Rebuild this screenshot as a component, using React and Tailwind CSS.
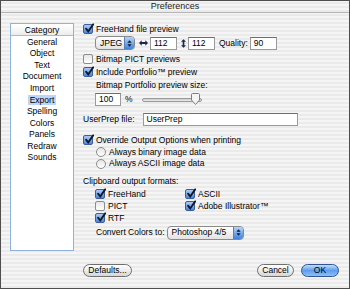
import React from 'react';

const stripes =
  'bg-[repeating-linear-gradient(0deg,#eaeaea_0px,#eaeaea_2px,#f5f5f5_2px,#f5f5f5_4px)]';

function Check({ on }) {
  if (!on) {
    return (
      <span className="w-[10px] h-[10px] rounded-[2px] border border-[#8c8c8c] bg-linear-to-b from-[#e6e6e6] to-white shrink-0" />
    );
  }
  return (
    <span className="relative w-[10px] h-[10px] rounded-[2px] border border-[#3b5f9c] bg-linear-to-b from-[#a9cbf5] to-[#4a86dc] shrink-0">
      <svg viewBox="0 0 12 12" className="absolute -top-[2px] left-0 w-[11px] h-[11px]">
        <path d="M2.2 6.2 L4.6 9.2 L10 1.5" stroke="#101828" strokeWidth="2" fill="none" strokeLinecap="round" />
      </svg>
    </span>
  );
}

function Radio() {
  return (
    <span className="w-[10px] h-[10px] rounded-full border border-[#8c8c8c] bg-linear-to-b from-[#e4e4e4] to-white shrink-0" />
  );
}

function CheckRow({ on, label, className = '' }) {
  return (
    <div className={`flex items-center gap-[3px] h-[12px] ${className}`}>
      <Check on={on} />
      <span>{label}</span>
    </div>
  );
}

function Field({ value, className = '' }) {
  return (
    <div className={`h-[13px] bg-white border border-[#9a9a9a] border-t-[#6e6e6e] flex items-center pl-[3px] ${className}`}>
      {value}
    </div>
  );
}

function Popup({ label, className = '' }) {
  return (
    <div className={`h-[14px] rounded-[4px] border border-[#8a8a8a] bg-linear-to-b from-white to-[#e2e2e2] flex items-center overflow-hidden ${className}`}>
      <span className="flex-1 pl-[4px]">{label}</span>
      <span className="w-[10px] h-full bg-linear-to-b from-[#b4d3f7] to-[#3f80da] border-l border-[#5a7fb5] flex items-center justify-center">
        <svg viewBox="0 0 6 10" className="w-[5px] h-[9px]">
          <path d="M0.5 4 L3 1 L5.5 4 Z M0.5 6 L3 9 L5.5 6 Z" fill="#0d1a33" />
        </svg>
      </span>
    </div>
  );
}

function Pill({ children, blue, className = '' }) {
  return (
    <div
      className={`h-[13px] rounded-full border flex items-center justify-center ${
        blue
          ? 'border-[#2f5594] bg-linear-to-b from-[#c2dcfa] via-[#5f9ded] to-[#8cc0f5]'
          : 'border-[#6f6f6f] bg-linear-to-b from-white via-[#ececec] to-[#d6d6d6]'
      } ${className}`}
    >
      {children}
    </div>
  );
}

const categories = ['General', 'Object', 'Text', 'Document', 'Import', 'Export', 'Spelling', 'Colors', 'Panels', 'Redraw', 'Sounds'];

export default function App() {
  return (
    <div
      className={`w-[350px] h-[289px] border border-[#4e4e4e] ${stripes} flex flex-col text-[8.5px] leading-none text-black overflow-hidden`}
      style={{ fontFamily: '"Liberation Sans", Arial, sans-serif' }}
    >
      {/* Title bar */}
      <div className="h-[12px] shrink-0 flex items-center justify-center border-b border-[#b4b4b4] text-[9px] text-[#222]">
        Preferences
      </div>

      <div className="flex pt-[10px]">
        {/* Category list */}
        <div className="ml-[9px] w-[64px] h-[228px] bg-white border border-[#8fb2de] flex flex-col items-center">
          <div className="w-[62px] h-[11px] mt-[1px] flex items-center justify-center border-b border-[#b8b8b8] bg-linear-to-b from-white to-[#ececec]">
            Category
          </div>
          {categories.map((c) => (
            <div key={c} className="h-[11.6px] flex items-center">
              <span className={c === 'Export' ? 'bg-[#bcd6fb] px-[2px] py-[1px]' : 'px-[2px]'}>{c}</span>
            </div>
          ))}
        </div>

        {/* Options panel */}
        <div className="ml-[9px] flex flex-col">
          <CheckRow on label="FreeHand file preview" />

          <div className="flex items-center h-[14px] mt-[1px] ml-[12px]">
            <Popup label="JPEG" className="w-[40px]" />
            <svg viewBox="0 0 10 6" className="w-[9px] h-[6px] ml-[4px]">
              <path d="M0 3 L3 0 L3 2 L7 2 L7 0 L10 3 L7 6 L7 4 L3 4 L3 6 Z" fill="#1b2a4a" />
            </svg>
            <Field value="112" className="w-[27px] ml-[2px]" />
            <svg viewBox="0 0 6 10" className="w-[5px] h-[9px] ml-[4px]">
              <path d="M3 0 L6 3 L4 3 L4 7 L6 7 L3 10 L0 7 L2 7 L2 3 L0 3 Z" fill="#1b2a4a" />
            </svg>
            <Field value="112" className="w-[27px] ml-[2px]" />
            <span className="ml-[4px]">Quality:</span>
            <Field value="90" className="w-[27px] ml-[2px]" />
          </div>

          <CheckRow label="Bitmap PICT previews" className="mt-[3px]" />
          <CheckRow on label="Include Portfolio™ preview" className="mt-[1px]" />
          <div className="h-[12px] flex items-center ml-[13px] mt-[1px]">Bitmap Portfolio preview size:</div>

          <div className="flex items-center h-[13px] mt-[2px] ml-[12px]">
            <Field value="100" className="w-[26px]" />
            <span className="ml-[4px]">%</span>
            <div className="relative ml-[9px] w-[60px] h-[13px] flex items-center">
              <div className="w-full h-[4px] rounded-full border border-[#9a9a9a] bg-linear-to-b from-[#c8c8c8] to-[#f0f0f0]" />
              <svg viewBox="0 0 9 12" className="absolute left-[49px] top-0 w-[9px] h-[12px]">
                <path d="M0.5 1.5 Q0.5 0.5 1.5 0.5 L7.5 0.5 Q8.5 0.5 8.5 1.5 L8.5 7 L4.5 11.5 L0.5 7 Z" fill="#f4f4f4" stroke="#7d7d7d" />
              </svg>
            </div>
          </div>

          <div className="flex items-center h-[13px] mt-[7px]">
            <span>UserPrep file:</span>
            <Field value="UserPrep" className="w-[155px] ml-[8px]" />
          </div>

          <CheckRow on label="Override Output Options when printing" className="mt-[8px]" />
          <div className="flex items-center gap-[3px] h-[12px] ml-[13px]">
            <Radio />
            <span>Always binary image data</span>
          </div>
          <div className="flex items-center gap-[3px] h-[11px] ml-[13px]">
            <Radio />
            <span>Always ASCII image data</span>
          </div>

          <div className="h-[12px] flex items-center mt-[6px]">Clipboard output formats:</div>
          <div className="grid grid-cols-[90px_auto] ml-[12px] mt-[1px]">
            <CheckRow on label="FreeHand" />
            <CheckRow on label="ASCII" />
            <CheckRow label="PICT" />
            <CheckRow on label="Adobe Illustrator™" />
            <CheckRow on label="RTF" />
          </div>

          <div className="flex items-center h-[15px] mt-[1px] ml-[13px]">
            <span>Convert Colors to:</span>
            <Popup label="Photoshop 4/5" className="w-[77px] ml-[2px]" />
          </div>
        </div>
      </div>

      {/* Buttons */}
      <div className="flex items-center mt-[13px] ml-[82px] mr-[10px]">
        <Pill className="w-[49px]">Defaults...</Pill>
        <Pill className="w-[37px] ml-auto">Cancel</Pill>
        <Pill blue className="w-[38px] ml-[7px]">OK</Pill>
      </div>
    </div>
  );
}
